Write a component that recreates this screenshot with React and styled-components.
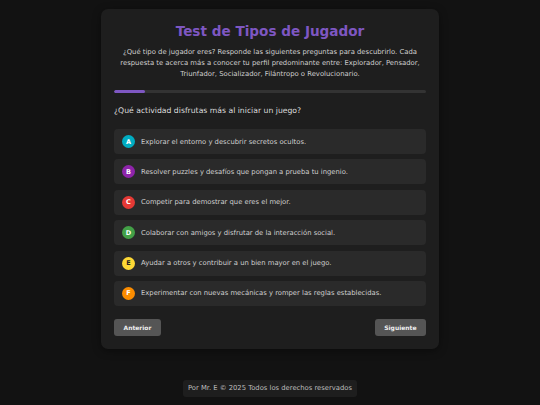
import React, { useState } from "react";
import styled, { createGlobalStyle } from "styled-components";

const GlobalStyle = createGlobalStyle`
  html, body {
    margin: 0;
    padding: 0;
    background-color: #121212;
    color: #e0e0e0;
    font-family: "DejaVu Sans", Verdana, sans-serif;
  }
`;

const Page = styled.div`
  min-height: 405px;
  display: flex;
  flex-direction: column;
  align-items: center;
  padding-top: 9px;
  box-sizing: border-box;
`;

const Card = styled.div`
  width: 338px;
  box-sizing: border-box;
  background-color: #1e1e1e;
  border-radius: 7px;
  padding: 13px 13px 13px;
  box-shadow: 0 2px 8px rgba(0, 0, 0, 0.4);
`;

const Title = styled.h1`
  margin: 0;
  text-align: center;
  color: #7e57c2;
  font-size: 13.6px;
  line-height: 18px;
  font-weight: bold;
`;

const Intro = styled.p`
  margin: 7px 4px 0;
  text-align: center;
  font-size: 6.85px;
  line-height: 11px;
  color: #cfcfcf;
`;

const Track = styled.div`
  margin-top: 10px;
  height: 3px;
  border-radius: 2px;
  background-color: #333;
  overflow: hidden;
`;

const Fill = styled.div`
  height: 100%;
  background-color: #7e57c2;
  border-radius: 2px;
`;

const Question = styled.h2`
  margin: 12px 0 12px;
  font-size: 7.7px;
  line-height: 12px;
  font-weight: normal;
  color: #dcdcdc;
`;

const Options = styled.div`
  display: flex;
  flex-direction: column;
  gap: 5.4px;
`;

const Option = styled.button`
  display: flex;
  align-items: center;
  gap: 6px;
  height: 25px;
  padding: 0 8px;
  border: none;
  border-radius: 4px;
  background-color: ${(props) => (props.$active ? "#343434" : "#2a2a2a")};
  color: #d0d0d0;
  font-family: inherit;
  font-size: 6.8px;
  text-align: left;
  cursor: pointer;
`;

const Badge = styled.span`
  width: 13px;
  height: 13px;
  flex-shrink: 0;
  border-radius: 50%;
  background-color: ${(props) => props.$color};
  color: ${(props) => props.$text || "#fff"};
  display: flex;
  align-items: center;
  justify-content: center;
  font-size: 6.5px;
  font-weight: bold;
`;

const Nav = styled.div`
  display: flex;
  justify-content: space-between;
  margin-top: 13px;
`;

const NavButton = styled.button`
  height: 17px;
  padding: 0 9.5px;
  border: none;
  border-radius: 3px;
  background-color: #555;
  color: #eee;
  font-family: inherit;
  font-size: 6px;
  font-weight: bold;
  cursor: pointer;
`;

const Footer = styled.footer`
  margin-top: auto;
  margin-bottom: 8px;
  padding: 4px 5px;
  background-color: #1e1e1e;
  border-radius: 3px;
  font-size: 6.8px;
  line-height: 9px;
  color: #bdbdbd;
`;

const options = [
  { key: "A", color: "#00acc1", text: "Explorar el entorno y descubrir secretos ocultos." },
  { key: "B", color: "#8e24aa", text: "Resolver puzzles y desafíos que pongan a prueba tu ingenio." },
  { key: "C", color: "#e53935", text: "Competir para demostrar que eres el mejor." },
  { key: "D", color: "#43a047", text: "Colaborar con amigos y disfrutar de la interacción social." },
  { key: "E", color: "#fdd835", textColor: "#222", text: "Ayudar a otros y contribuir a un bien mayor en el juego." },
  { key: "F", color: "#fb8c00", text: "Experimentar con nuevas mecánicas y romper las reglas establecidas." },
];

export default function App() {
  const [selected, setSelected] = useState(null);
  const progress = 10;

  return (
    <>
      <GlobalStyle />
      <Page>
        <Card>
          <Title>Test de Tipos de Jugador</Title>
          <Intro>
            ¿Qué tipo de jugador eres? Responde las siguientes preguntas para descubrirlo. Cada
            respuesta te acerca más a conocer tu perfil predominante entre: Explorador, Pensador,
            Triunfador, Socializador, Filántropo o Revolucionario.
          </Intro>
          <Track>
            <Fill style={{ width: `${progress}%` }} />
          </Track>
          <Question>¿Qué actividad disfrutas más al iniciar un juego?</Question>
          <Options>
            {options.map((opt) => (
              <Option
                key={opt.key}
                $active={selected === opt.key}
                onClick={() => setSelected(opt.key)}
              >
                <Badge $color={opt.color} $text={opt.textColor}>
                  {opt.key}
                </Badge>
                {opt.text}
              </Option>
            ))}
          </Options>
          <Nav>
            <NavButton>Anterior</NavButton>
            <NavButton>Siguiente</NavButton>
          </Nav>
        </Card>
        <Footer>Por Mr. E © 2025 Todos los derechos reservados</Footer>
      </Page>
    </>
  );
}
